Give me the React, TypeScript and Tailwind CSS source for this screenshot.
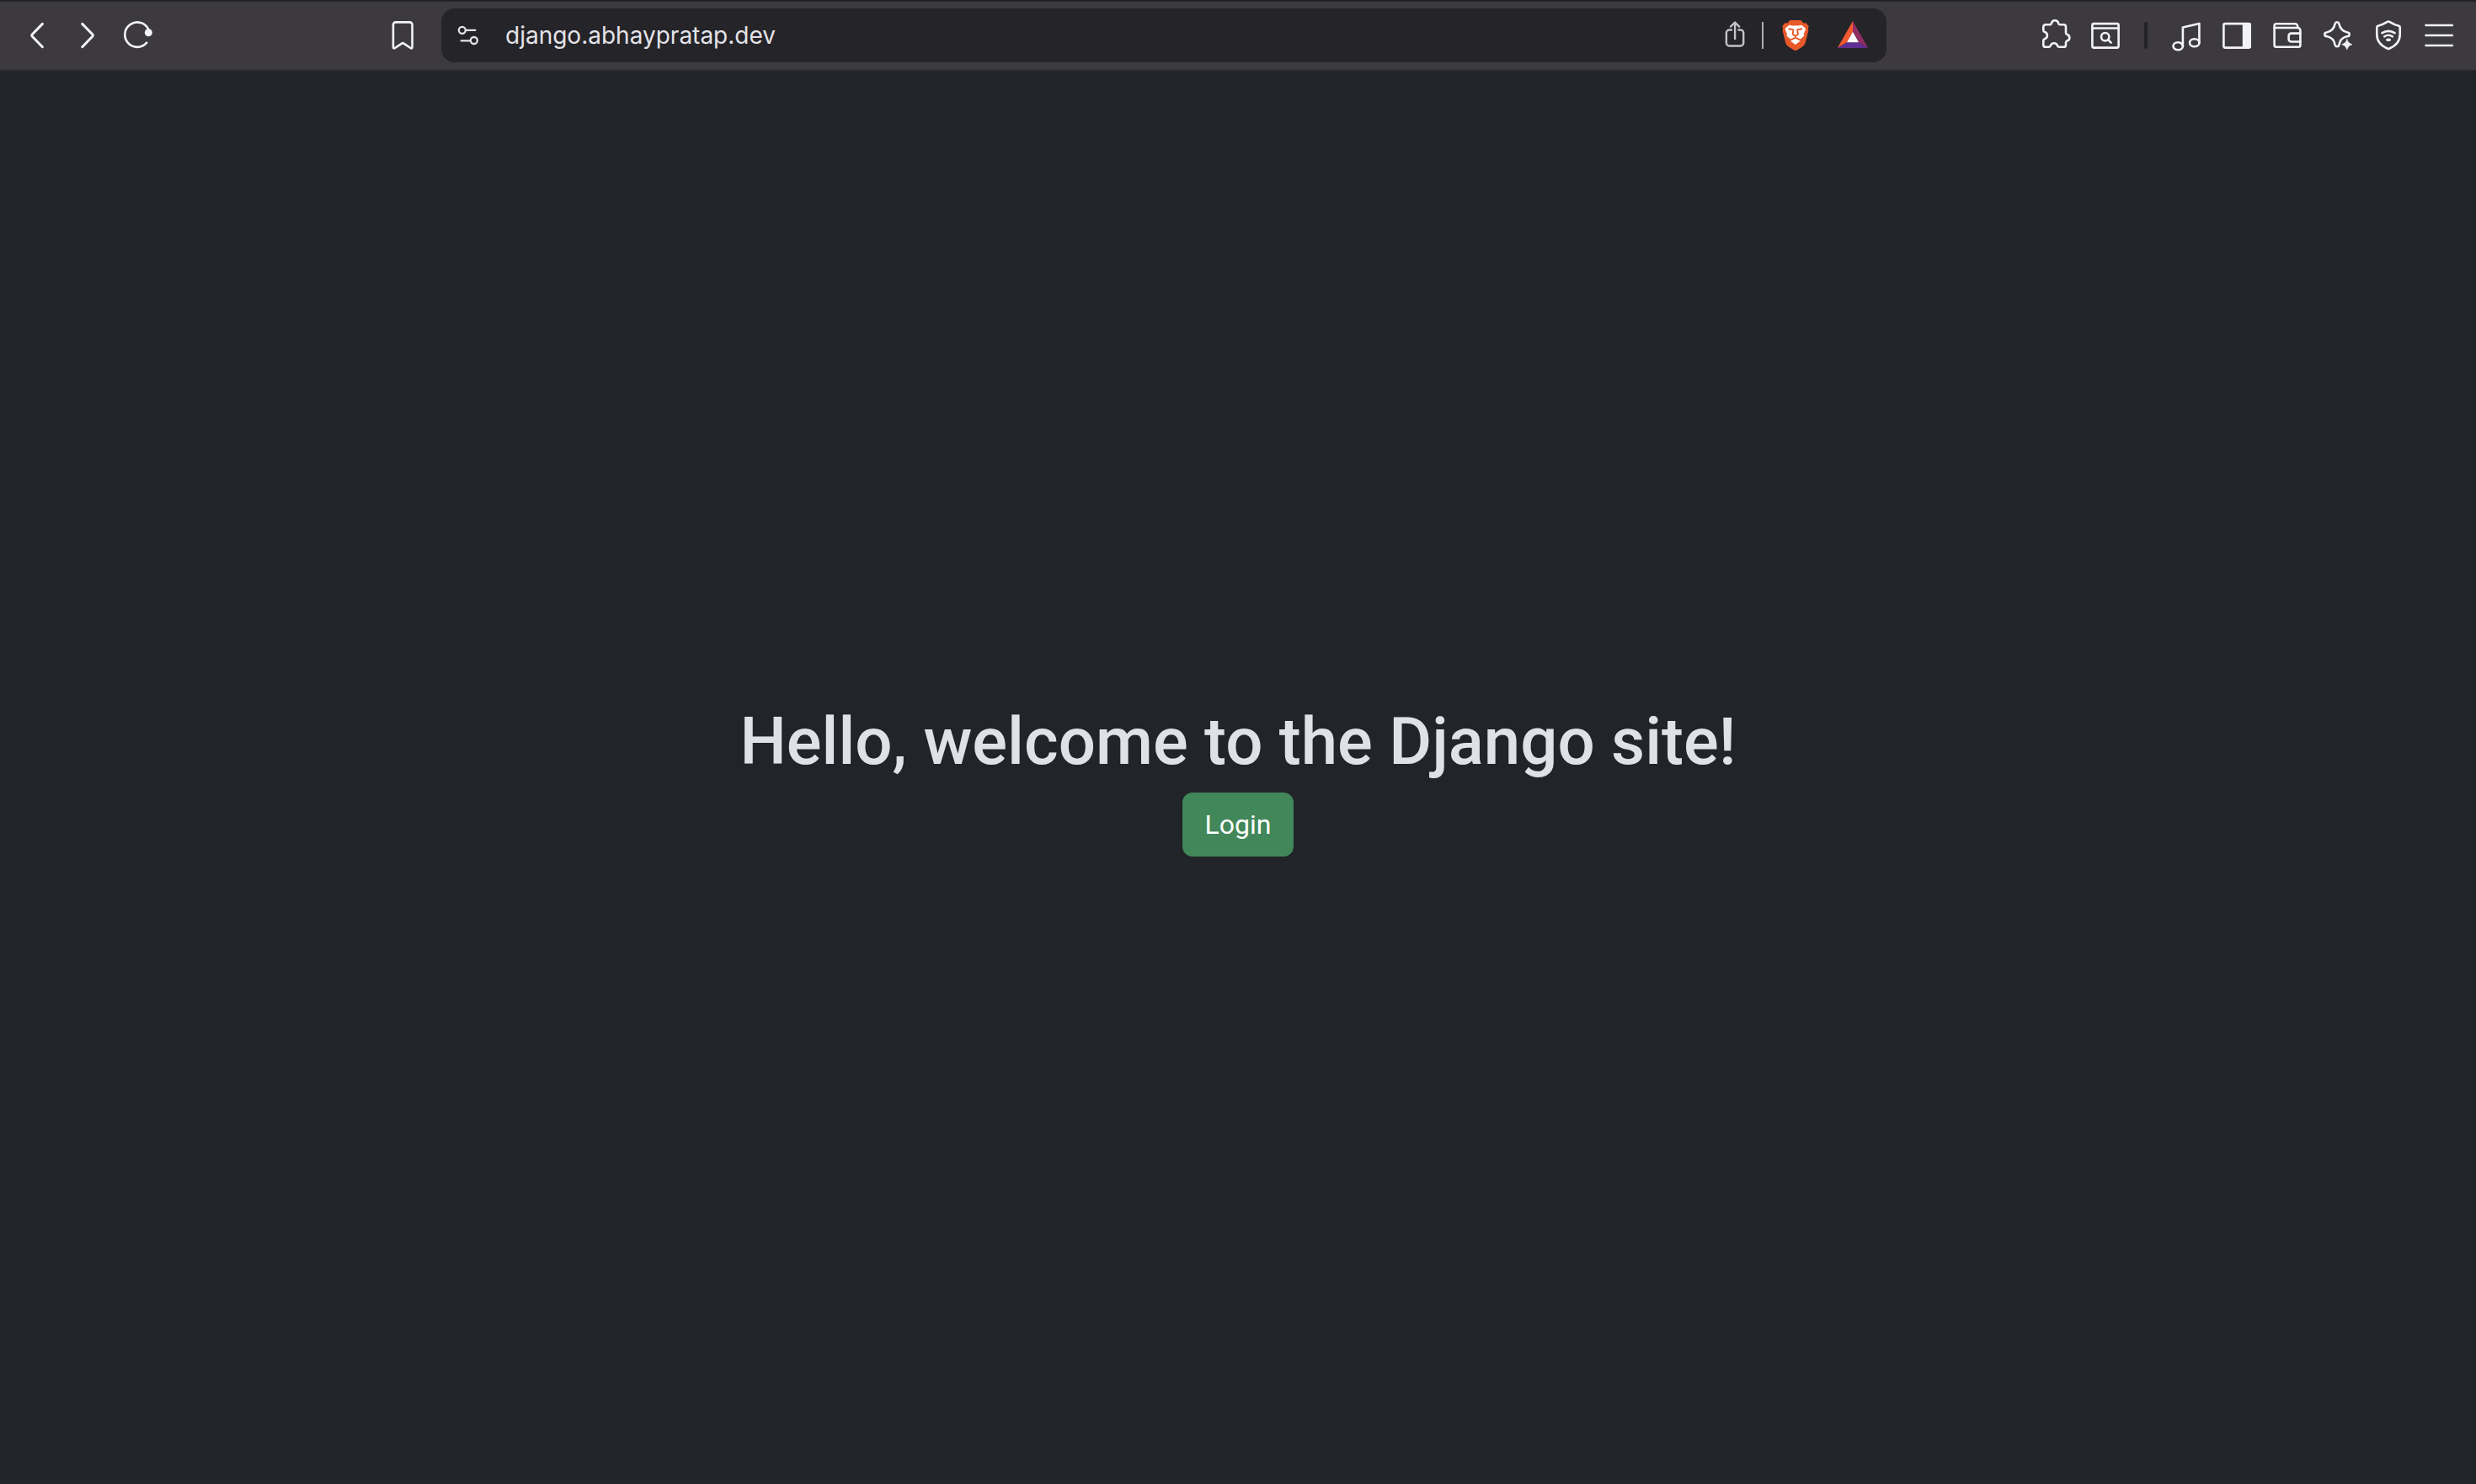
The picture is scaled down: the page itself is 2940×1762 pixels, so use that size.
import type { ReactNode } from "react";

function Icon({ children, className = "" }: { children: ReactNode; className?: string }) {
  return (
    <svg
      viewBox="0 0 40 40"
      className={`size-10 shrink-0 ${className}`}
      fill="none"
      stroke="currentColor"
      strokeWidth="2.6"
      strokeLinecap="round"
      strokeLinejoin="round"
      aria-hidden="true"
    >
      {children}
    </svg>
  );
}

function ToolButton({ label, children }: { label: string; children: ReactNode }) {
  return (
    <button type="button" aria-label={label} className="flex h-16 w-15 shrink-0 items-center justify-center">
      <Icon>{children}</Icon>
    </button>
  );
}

function AddressBar() {
  return (
    <div className="mr-[170px] flex h-16 min-w-0 flex-1 items-center rounded-2xl bg-[#252429] pr-5 pl-3">
      <button type="button" aria-label="Site settings" className="text-[#e4e3e8]">
        <Icon>
          <g strokeWidth="2.3">
            <circle cx="12.8" cy="13.8" r="4" />
            <path d="M17 13.8h11.4" />
            <circle cx="26.8" cy="26" r="4" />
            <path d="M11.6 26.4h11" />
          </g>
        </Icon>
      </button>
      <input
        type="text"
        aria-label="Address"
        defaultValue="django.abhaypratap.dev"
        className="ml-6 min-w-0 flex-1 bg-transparent text-[28px] leading-10 text-[#e4e3e8] outline-none"
      />
      <button type="button" aria-label="Share" className="text-[#c4c3c9]">
        <Icon>
          <g strokeWidth="2.4">
            <path d="M16 13.5h-2.6a3.5 3.5 0 0 0-3.5 3.5v12a3.5 3.5 0 0 0 3.5 3.5h13.3a3.5 3.5 0 0 0 3.5-3.5V17a3.5 3.5 0 0 0-3.5-3.5h-2.4" />
            <path d="M20.1 24V4.800M15 9.600l5.100-5.100 5.100 5.100" />
          </g>
        </Icon>
      </button>
      <div className="ml-3 h-8 w-0.5 bg-[#aeadb2]" />
      <button type="button" aria-label="Brave Shields" className="ml-4.5">
        <svg viewBox="0 0 40 40" className="size-10" strokeLinecap="round" strokeLinejoin="round" aria-hidden="true">
          <path
            d="M13.500 2h12.800l3.200 3.600 3-.4 3.300 4-1 2.800.6 2.400-3.800 14.600c-.5 1.800-1.300 2.800-2.800 3.900l-7 4.600c-1.300.8-2.400.8-3.700 0l-7-4.600c-1.500-1.100-2.300-2.100-2.800-3.900L4.600 14.400l.6-2.400-1-2.800 3.300-4 3 .4z"
            fill="#e85a29"
          />
          <path
            d="M12.500 7.800c2.400.6 4.600.8 7.300.4 2.800.4 5 .2 7.400-.4l4.800 3.900c-.2 2.500-1.300 4.300-2.300 6.500l.6 2.200-4.500 4.200-.2 2.200-5.800 4.200-5.700-4.200-.2-2.200-4.500-4.200.6-2.200c-1-2.200-2.100-4-2.300-6.500z"
            fill="#fff"
          />
          <path
            d="M12.300 12.200l5.200 1.200-.9 5.200 3.200 2.200 3.200-2.200-.9-5.200 5.200-1.200M19.800 20.800v1.800M13.800 25.600l6-3 6 3"
            fill="none"
            stroke="#e85a29"
            strokeWidth="1.9"
          />
        </svg>
      </button>
      <button type="button" aria-label="Brave Rewards" className="ml-7">
        <svg viewBox="0 0 40 40" className="size-10" aria-hidden="true">
          <path d="M20 3v12.700l-7 12.600L1.800 35z" fill="#f1592f" />
          <path d="M20 3l18.200 32L27 28.300l-7-12.600z" fill="#8f2f64" />
          <path d="M1.800 35L13 28.300h14L38.200 35z" fill="#5f2f91" />
          <path d="M20 15.700l7 12.600H13z" fill="#fff" />
        </svg>
      </button>
    </div>
  );
}

function BrowserToolbar() {
  return (
    <header className="flex h-21 shrink-0 items-center border-t-2 border-b-2 border-t-[#222126] border-b-[#333236] bg-[#3c3a3f] px-3.5 text-[#f3f3f5]">
      <nav aria-label="Navigation" className="mr-[254px] flex">
        <ToolButton label="Back">
          <path strokeWidth="3" d="M26.400 6.400L14.100 19a1.500 1.500 0 0 0 0 2L26.400 33.700" />
        </ToolButton>
        <ToolButton label="Forward">
          <path strokeWidth="3" d="M13.700 6.400L26 19a1.500 1.500 0 0 1 0 2L13.700 33.700" />
        </ToolButton>
        <ToolButton label="Reload">
          <path d="M32.400 13.100A14.700 14.700 0 1 0 30.200 28.700" />
          <circle cx="32.300" cy="16.700" r="4.500" fill="currentColor" stroke="none" />
        </ToolButton>
      </nav>
      <div className="mr-4">
        <ToolButton label="Bookmark">
          <path d="M11.900 4.400h16.600a3 3 0 0 1 3 3v26.600c0 1.200-1 1.700-2 1l-8.100-5.400a2 2 0 0 0-2.300 0L11 35c-1 .7-2.100.2-2.100-1V7.400a3 3 0 0 1 3-3z" />
        </ToolButton>
      </div>
      <AddressBar />
      <div className="flex items-center">
        <ToolButton label="Extensions">
          <path d="M8.900 7.200h5.300c1.400 0 1.600-1 1.800-1.800a4.200 4.200 0 0 1 8.100 0c.2.800.4 1.800 1.800 1.800h4.500a2.600 2.600 0 0 1 2.600 2.600v7.200c0 1.300.8 1.600 1.600 1.900a4 4 0 0 1 0 7.600c-.8.3-1.600.6-1.600 1.900v2.800a2.600 2.600 0 0 1-2.600 2.600H25c-1.400 0-1.700-.8-2-1.600a4.300 4.300 0 0 0-8.200 0c-.3.800-.6 1.600-2 1.600H8.900a2.600 2.600 0 0 1-2.600-2.600v-5c0-1.400.8-1.700 1.600-2a4.300 4.300 0 0 0 0-8.200c-.8-.3-1.600-.6-1.600-2V9.800a2.600 2.600 0 0 1 2.600-2.600z" />
        </ToolButton>
        <ToolButton label="Search tabs">
          <rect x="4.400" y="6.100" width="31.200" height="28.500" rx="1.800" />
          <path d="M4.400 11.500h31.200M23.200 25.200l3.400 3.400" />
          <circle cx="19.700" cy="21.700" r="4.700" />
        </ToolButton>
        <div className="mx-4 h-8 w-1 rounded-full bg-[#232227]" />
        <ToolButton label="Playlist">
          <ellipse cx="10.200" cy="32.800" rx="5.700" ry="4.500" />
          <ellipse cx="29.700" cy="28.700" rx="5.700" ry="4.500" />
          <path d="M15.900 32.800V10.500L35.400 6v22.700" />
        </ToolButton>
        <ToolButton label="Sidebar">
          <rect x="4.400" y="6.100" width="31.200" height="28.500" rx="1.800" />
          <path d="M26.800 5h8.200a2 2 0 0 1 2 2v26.600a2 2 0 0 1-2 2h-8.200z" fill="currentColor" stroke="none" />
        </ToolButton>
        <ToolButton label="Wallet">
          <path d="M4.600 11V8.300a2 2 0 0 1 2-2h22.600a3 3 0 0 1 3 3V11" />
          <path d="M4.600 11h27.800a3 3 0 0 1 3 3v17.700a2 2 0 0 1-2 2H6.600a2 2 0 0 1-2-2z" />
          <path d="M35.400 17.600H24.600a3 3 0 0 0-3 3v3.900a3 3 0 0 0 3 3h10.800" />
        </ToolButton>
        <ToolButton label="Leo AI">
          <path d="M16.700 6a2.400 2.400 0 0 1 4.600 0C22.600 12.300 25.400 15.300 31.400 16.500a2.300 2.300 0 0 1 0 4.600C25.400 22.300 22.500 25 21.300 31.600a2.400 2.400 0 0 1-4.600 0C15.500 25 12.600 22.300 6.600 21.100a2.300 2.300 0 0 1 0-4.600C12.600 15.300 15.400 12.300 16.700 6z" />
          <path
            d="M30.800 24.500q1.200 5 6.200 6.200-5 1.200-6.200 6.200-1.200-5-6.200-6.200 5-1.200 6.200-6.200z"
            fill="currentColor"
            strokeWidth="0.6"
          />
        </ToolButton>
        <ToolButton label="VPN">
          <path d="M18.800 3.900a2.200 2.200 0 0 1 2.400 0c3.500 2.200 7.500 3.900 11.200 4.900.8.2 1.300.9 1.300 1.700V19c0 8-5 13.400-12.700 16.700a2.400 2.400 0 0 1-2 0C11.300 32.400 6.300 27 6.300 19v-8.500c0-.8.5-1.500 1.300-1.700 3.700-1 7.700-2.700 11.200-4.900z" />
          <path d="M12.500 17.200a14 14 0 0 1 15 0M15.200 21.300a9 9 0 0 1 9.600 0" />
          <ellipse cx="20" cy="25.200" rx="3" ry="1.800" fill="currentColor" stroke="none" />
        </ToolButton>
        <ToolButton label="Menu">
          <path strokeLinecap="butt" d="M3.400 8h33.400M3.400 20h33.400M3.400 32h33.400" />
        </ToolButton>
      </div>
    </header>
  );
}

export default function App() {
  return (
    <div className="flex min-h-screen flex-col bg-[#212529] font-['Inter',sans-serif]">
      <BrowserToolbar />
      <main className="flex flex-1 flex-col items-center justify-center font-['Roboto',sans-serif]">
        <h1 className="mb-2 text-[78px] leading-[104px] font-medium text-[#dee2e6]">
          Hello, welcome to the Django site!
        </h1>
        <a
          href="#login"
          className="rounded-xl border-2 border-[#42875a] bg-[#42875a] px-[25px] py-3 text-[32px] leading-12 text-white"
        >
          Login
        </a>
      </main>
    </div>
  );
}
